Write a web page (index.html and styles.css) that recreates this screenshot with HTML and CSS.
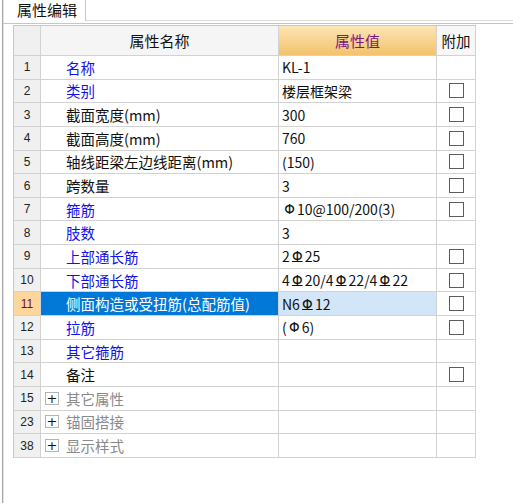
FILE: index.html
```html
<!DOCTYPE html>
<html lang="zh-CN">
<head>
<meta charset="utf-8">
<title>属性编辑</title>
<link rel="stylesheet" href="styles.css">
</head>
<body>
<div class="window">
  <div class="tabstrip">
    <div class="tab"><span class="tab-label">属性编辑</span></div>
  </div>
  <div class="panel">
    <div class="grid">
      <div class="cell hdr num-hdr"></div>
      <div class="cell hdr name-hdr">属性名称</div>
      <div class="cell hdr value-hdr">属性值</div>
      <div class="cell hdr extra-hdr">附加</div>

      <div class="cell num">1</div>
      <div class="cell name blue">名称</div>
      <div class="cell value">KL-1</div>
      <div class="cell extra"></div>

      <div class="cell num">2</div>
      <div class="cell name blue">类别</div>
      <div class="cell value">楼层框架梁</div>
      <div class="cell extra"><span class="check"></span></div>

      <div class="cell num">3</div>
      <div class="cell name">截面宽度(mm)</div>
      <div class="cell value">300</div>
      <div class="cell extra"><span class="check"></span></div>

      <div class="cell num">4</div>
      <div class="cell name">截面高度(mm)</div>
      <div class="cell value">760</div>
      <div class="cell extra"><span class="check"></span></div>

      <div class="cell num">5</div>
      <div class="cell name">轴线距梁左边线距离(mm)</div>
      <div class="cell value">(150)</div>
      <div class="cell extra"><span class="check"></span></div>

      <div class="cell num">6</div>
      <div class="cell name">跨数量</div>
      <div class="cell value">3</div>
      <div class="cell extra"><span class="check"></span></div>

      <div class="cell num">7</div>
      <div class="cell name blue">箍筋</div>
      <div class="cell value"><span class="bar">Φ</span>10@100/200(3)</div>
      <div class="cell extra"><span class="check"></span></div>

      <div class="cell num">8</div>
      <div class="cell name blue">肢数</div>
      <div class="cell value">3</div>
      <div class="cell extra"></div>

      <div class="cell num">9</div>
      <div class="cell name blue">上部通长筋</div>
      <div class="cell value">2<span class="bar bar3">Φ</span>25</div>
      <div class="cell extra"><span class="check"></span></div>

      <div class="cell num">10</div>
      <div class="cell name blue">下部通长筋</div>
      <div class="cell value">4<span class="bar bar3">Φ</span>20/4<span class="bar bar3">Φ</span>22/4<span class="bar bar3">Φ</span>22</div>
      <div class="cell extra"><span class="check"></span></div>

      <div class="cell num sel-num">11</div>
      <div class="cell name sel-name">侧面构造或受扭筋(总配筋值)</div>
      <div class="cell value sel-value">N6<span class="bar bar3">Φ</span>12</div>
      <div class="cell extra"><span class="check"></span></div>

      <div class="cell num">12</div>
      <div class="cell name blue">拉筋</div>
      <div class="cell value">(<span class="bar">Φ</span>6)</div>
      <div class="cell extra"><span class="check"></span></div>

      <div class="cell num">13</div>
      <div class="cell name blue">其它箍筋</div>
      <div class="cell value"></div>
      <div class="cell extra"></div>

      <div class="cell num">14</div>
      <div class="cell name">备注</div>
      <div class="cell value"></div>
      <div class="cell extra"><span class="check"></span></div>

      <div class="cell num">15</div>
      <div class="cell name group"><span class="plus">+</span>其它属性</div>
      <div class="cell value"></div>
      <div class="cell extra"></div>

      <div class="cell num">23</div>
      <div class="cell name group"><span class="plus">+</span>锚固搭接</div>
      <div class="cell value"></div>
      <div class="cell extra"></div>

      <div class="cell num">38</div>
      <div class="cell name group"><span class="plus">+</span>显示样式</div>
      <div class="cell value"></div>
      <div class="cell extra"></div>
    </div>
  </div>
</div>
</body>
</html>
```
FILE: styles.css
```css
html, body {
  margin: 0;
  padding: 0;
  background: #ffffff;
}

body {
  font-family: "Noto Sans CJK SC", "Noto Sans", sans-serif;
  font-size: 14.5px;
  color: #111111;
}

.window {
  margin-left: 2px;
  height: 503px;
  border-left: 1px solid #a6a6a6;
  box-shadow: inset 1px 0 0 #e4e4e4;
  overflow: hidden;
}

.tabstrip {
  display: flex;
  height: 20px;
  border-bottom: 1px solid #dcdcdc;
}

.tab {
  width: 82px;
  height: 21px;
  margin-left: 1px;
  background: #ffffff;
  border-right: 1px solid #c8c8c8;
  box-sizing: border-box;
}

.tab-label {
  display: block;
  padding: 1px 0 0 13px;
  font-size: 15px;
  line-height: 17px;
  color: #111111;
}

.panel {
  margin-top: 2px;
  border-top: 1px solid #c6c6c6;
  padding: 1px 0 0 10px;
}

.grid {
  display: grid;
  grid-template-columns: 27px 238px 158px 39px;
  grid-template-rows: 30px repeat(17, 23.65px);
  width: max-content;
  border-left: 1px solid #c8c8c8;
  border-top: 1px solid #c8c8c8;
}

.cell {
  box-sizing: border-box;
  border-right: 1px solid #d2d2d2;
  border-bottom: 1px solid #d2d2d2;
  display: flex;
  align-items: center;
  white-space: nowrap;
  overflow: hidden;
  background: #ffffff;
}

.hdr {
  justify-content: center;
  font-size: 15px;
  background: #f5f5f5;
  color: #111111;
}

.num-hdr {
  background: #f0f0f0;
}

.value-hdr {
  background: linear-gradient(#fde5b6, #f3c26a);
  color: #7a1780;
}

.extra-hdr {
  background: #f7f7f7;
  font-size: 14.5px;
}

.num {
  justify-content: center;
  background: #f0f0f0;
  font-family: "Liberation Sans", "DejaVu Sans", sans-serif;
  font-size: 12px;
  color: #222222;
}

.name {
  padding-left: 25px;
}

.blue {
  color: #1111ee;
}

.group {
  padding-left: 4px;
  color: #8a8a8a;
}

.plus {
  width: 14px;
  height: 13px;
  box-sizing: border-box;
  border: 1px solid #b4b4b4;
  background: #ffffff;
  margin-right: 7px;
  display: flex;
  align-items: center;
  justify-content: center;
  font-family: "DejaVu Sans", sans-serif;
  font-size: 13px;
  line-height: 1;
  color: #111111;
}

.value {
  padding-left: 3px;
  font-size: 14px;
}

.bar {
  display: inline-block;
  width: 15px;
  text-align: center;
  font-family: "DejaVu Sans", sans-serif;
  font-size: 13.5px;
}

.bar3 {
  text-decoration: underline;
  text-underline-offset: 0px;
}

.extra {
  justify-content: center;
}

.check {
  width: 15px;
  height: 15px;
  box-sizing: border-box;
  border: 1.5px solid #5c5c5c;
  background: #ffffff;
}

.sel-num {
  background: #fcd69b;
  color: #6d0f3c;
}

.sel-name {
  background: #0078d7;
  color: #ffffff;
}

.sel-value {
  background: #d3e6f7;
}
```
